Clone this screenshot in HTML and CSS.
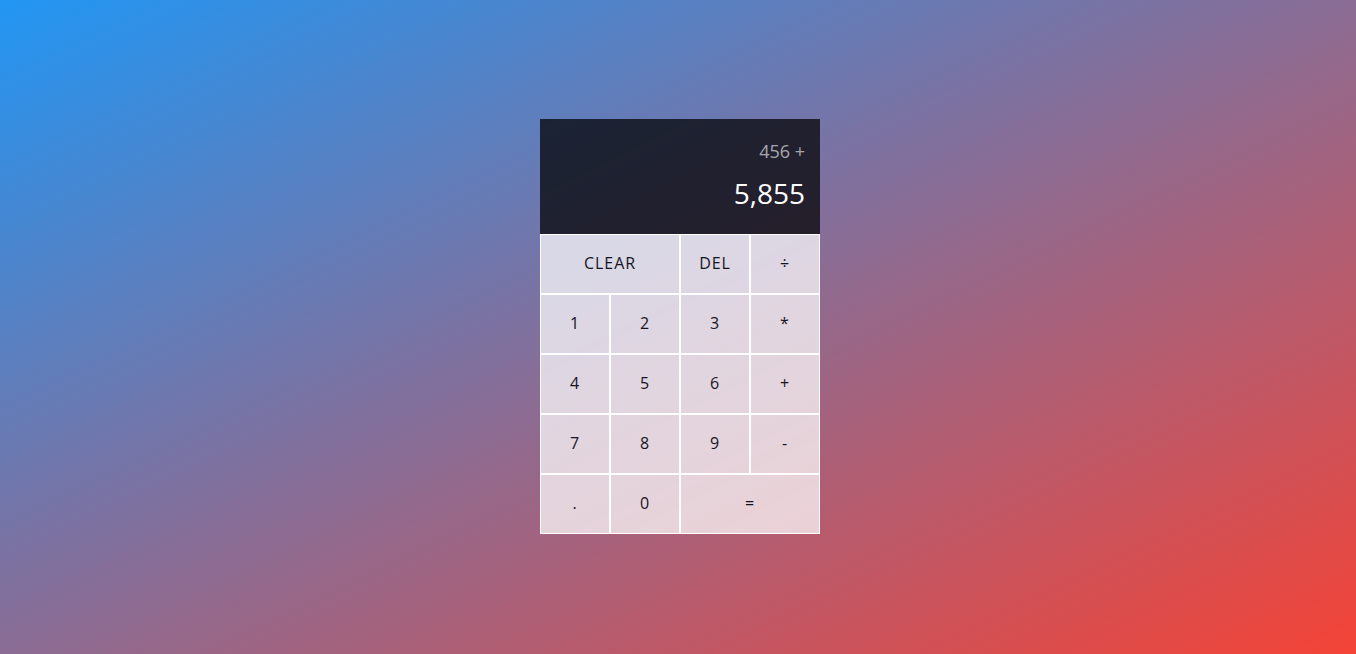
FILE: index.html
```html
<!DOCTYPE html>
<html lang="en">
<head>
<meta charset="utf-8">
<title>Calculator</title>
<link rel="stylesheet" href="styles.css">
</head>
<body>
<div class="calculator">
  <div class="output">
    <div class="previous">456 +</div>
    <div class="current">5,855</div>
  </div>
  <button class="span-two">CLEAR</button>
  <button>DEL</button>
  <button>÷</button>
  <button>1</button>
  <button>2</button>
  <button>3</button>
  <button>*</button>
  <button>4</button>
  <button>5</button>
  <button>6</button>
  <button>+</button>
  <button>7</button>
  <button>8</button>
  <button>9</button>
  <button>-</button>
  <button>.</button>
  <button>0</button>
  <button class="span-two">=</button>
</div>
</body>
</html>
```

FILE: styles.css
```css
*, *::before, *::after {
  box-sizing: border-box;
}

body {
  margin: 0;
  font-family: "Open Sans", "Liberation Sans", sans-serif;
  background: linear-gradient(to bottom right, #2196f3, #f44336);
  min-height: 100vh;
}

.calculator {
  display: grid;
  justify-content: center;
  align-content: center;
  min-height: 100vh;
  padding: 0 0 1px 4px;
  grid-template-columns: repeat(4, 70px);
  grid-template-rows: 115px repeat(5, 60px);
}

.calculator > button {
  cursor: pointer;
  font-family: inherit;
  font-size: 16px;
  line-height: 20px;
  letter-spacing: 0.06em;
  color: #15141f;
  border: 1px solid #fff;
  outline: none;
  background-color: rgba(255, 255, 255, 0.72);
  padding: 0 0 2px;
}

.span-two {
  grid-column: span 2;
}

.output {
  grid-column: 1 / -1;
  background-color: rgba(0, 0, 0, 0.72);
  display: flex;
  flex-direction: column;
  align-items: flex-end;
  padding: 21px 15px 0;
  gap: 14px;
}

.previous {
  color: rgba(255, 255, 255, 0.62);
  font-size: 18px;
  line-height: 22px;
}

.current {
  color: #fff;
  font-size: 28px;
  line-height: 34px;
}
```
